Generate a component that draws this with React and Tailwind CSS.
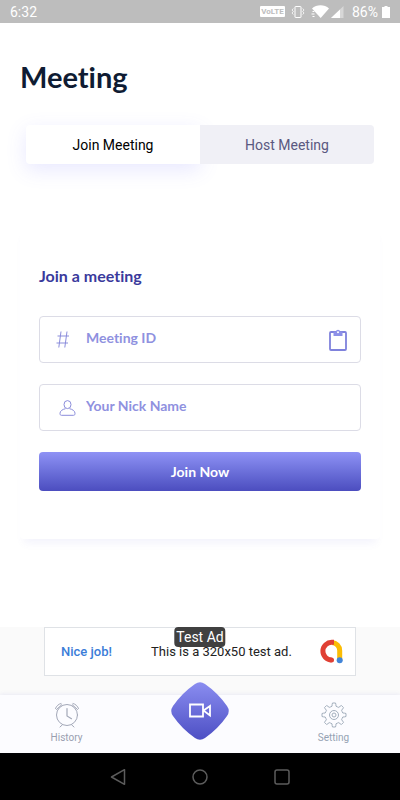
/**
 * Meeting Screen
 */

import { useState } from 'react';

function VolteIcon() {
    return (
        <span className="flex h-[11px] w-[25px] items-center justify-center rounded-[1px] bg-white text-[8px] leading-none font-bold text-[#bdbdbd]">
            VoLTE
        </span>
    );
}

function VibrateIcon() {
    return (
        <svg width="14" height="12" viewBox="0 0 14 12" fill="none" stroke="white" strokeWidth="1">
            <rect x="4" y="0.5" width="6" height="11" rx="0.5" />
            <path d="M2.3 2.5L1 4l1.300 1.500L1 7l1.300 1.500M11.700 2.500L13 4l-1.300 1.500L13 7l-1.300 1.500" strokeWidth="0.8" />
        </svg>
    );
}

function WifiIcon() {
    return (
        <svg width="18" height="13" viewBox="0 0 18 13" fill="white">
            <path d="M1 3.500C5.500-.7 13.500-.7 18 3.500L9.700 13z" />
            <path d="M0 6h4v7H0z" fill="#bdbdbd" />
            <path d="M1.500 6.500h2M0.500 9h3M1.500 11.500h2" stroke="white" strokeWidth="1" />
        </svg>
    );
}

function SignalIcon() {
    return (
        <svg width="13" height="12" viewBox="0 0 13 12" fill="white">
            <path d="M0 12L12.500 0v12z" fillOpacity="0.4" />
            <path d="M0 12L9 3.400V12z" />
        </svg>
    );
}

function BatteryIcon() {
    return (
        <svg width="8" height="12" viewBox="0 0 8 12" fill="white">
            <path d="M2.500 0h3v1H8v11H0V1h2.500z" />
        </svg>
    );
}

function HashIcon() {
    return (
        <svg width="14" height="17" viewBox="0 0 14 17" fill="none" stroke="#8b8ddb" strokeWidth="1">
            <path d="M5 0.500L2.800 16.500M11 0.500L8.800 16.500M1.500 5H13M0.500 12H12" />
        </svg>
    );
}

function PersonIcon() {
    return (
        <svg width="20" height="16" viewBox="0 0 20 16" fill="none" stroke="#8b8ddb" strokeWidth="1">
            <ellipse cx="11.500" cy="4.600" rx="3.500" ry="4" />
            <path d="M9.500 8.700C6.500 9.300 4 11 4 13.300c0 1.500.4 2 1.500 2h12c1.100 0 1.500-.5 1.500-2 0-2.300-2.500-4-5.500-4.600" />
        </svg>
    );
}

function ClipboardIcon() {
    return (
        <svg width="18" height="22" viewBox="0 0 18 22">
            <rect x="1" y="3" width="16" height="18" rx="1" fill="none" stroke="#7f82dc" strokeWidth="1.800" />
            <path d="M4.500 2.500h2.200a2.400 2.400 0 0 1 4.600 0h2.200V7h-9z" fill="#8d90e8" />
            <circle cx="9" cy="3.200" r="1" fill="white" />
        </svg>
    );
}

function AlarmIcon() {
    return (
        <svg width="26" height="26" viewBox="0 0 26 26" fill="none" stroke="#a3a8b8" strokeWidth="1" strokeLinecap="round">
            <circle cx="13" cy="13" r="10.500" />
            <path d="M13 6.500V14l4.500 2.700" strokeWidth="1.200" />
            <path d="M1.500 6.500C2.500 4 4.500 2 7 1.500M2.500 7.500L7.800 2.700M24.500 6.500C23.500 4 21.500 2 19 1.500M23.500 7.500L18.200 2.700" />
            <path d="M8.500 22.700L6 25M17.500 22.700L20 25" />
        </svg>
    );
}

function GearIcon() {
    return (
        <svg width="26" height="26" viewBox="0 0 26 26" fill="none" stroke="#a3afbd" strokeWidth="1" strokeLinejoin="round">
            <path d="M11.500 1h3Q15 2.500 15 4.200Q16.400 5 17.800 5.400Q19 4.200 20.400 3.500L22.500 5.600Q21.800 7 20.600 8.200Q21 9.600 21.800 11Q23.500 11 25 11.500v3Q23.500 15 21.800 15Q21 16.400 20.600 17.800Q21.800 19 22.500 20.400L20.400 22.500Q19 21.800 17.800 20.600Q16.400 21 15 21.800Q15 23.500 14.500 25h-3Q11 23.500 11 21.800Q9.600 21 8.200 20.600Q7 21.800 5.600 22.500L3.500 20.400Q4.200 19 5.400 17.800Q5 16.400 4.200 15Q2.500 15 1 14.500v-3Q2.500 11 4.200 11Q5 9.600 5.400 8.200Q4.200 7 3.500 5.600L5.600 3.500Q7 4.200 8.200 5.400Q9.600 5 11 4.200Q11 2.500 11.500 1z" />
            <circle cx="13" cy="13" r="4.500" />
            <circle cx="13" cy="13" r="2" />
        </svg>
    );
}

function AdMobLogo() {
    return (
        <svg width="25" height="25" viewBox="0 0 25 25" fill="none" strokeWidth="5">
            <path d="M13 3.500a8 8 0 0 1 7.700 8V21" stroke="#fbbc04" />
            <path d="M15 3.300h-2a8.800 8.800 0 0 0-.5 17.700" stroke="#e04034" />
            <circle cx="12.500" cy="21" r="2.500" fill="#e04034" />
            <circle cx="20.700" cy="21.300" r="3" fill="#4285d8" />
        </svg>
    );
}

function CameraButton() {
    return (
        <button type="button" aria-label="Start meeting" className="absolute -top-[14px] left-1/2 -translate-x-1/2">
            <svg width="60" height="60" viewBox="0 0 60 60" fill="none">
                <defs>
                    <linearGradient id="fab" x1="0" y1="0" x2="0" y2="1">
                        <stop offset="0" stopColor="#8a8df0" />
                        <stop offset="1" stopColor="#4d4fc4" />
                    </linearGradient>
                </defs>
                <path
                    d="M25 3Q30-.500 35 3Q48 12 57 25Q60.500 30 57 35Q48 48 35 57Q30 60.500 25 57Q12 48 3 35Q-.500 30 3 25Q12 12 25 3z"
                    fill="url(#fab)"
                />
                <path d="M20 23.500h13v12H20zM33.500 29.500L40 25v9.500z" stroke="white" strokeWidth="1.800" />
            </svg>
        </button>
    );
}

function StatusBar() {
    return (
        <header className="flex h-[23px] items-center justify-between bg-[#bdbdbd] px-2.5 text-sm text-white">
            <span>6:32</span>
            <div className="flex items-center gap-1.5">
                <VolteIcon />
                <VibrateIcon />
                <div className="flex items-center gap-0.5">
                    <WifiIcon />
                    <SignalIcon />
                </div>
                <div className="flex items-center gap-1 pl-0.5">
                    <span>86%</span>
                    <BatteryIcon />
                </div>
            </div>
        </header>
    );
}

function Tabs({ active, onChange }) {
    const base = 'h-[39px] flex-1 text-sm';
    const on = 'rounded-l bg-white text-black shadow-[0_6px_20px_rgba(100,100,255,0.15)]';
    const off = 'rounded-r bg-[#f0f0f6] text-[#5a5880]';

    return (
        <div role="tablist" className="mx-[26px] flex">
            {['Join Meeting', 'Host Meeting'].map((label) => (
                <button
                    key={label}
                    type="button"
                    role="tab"
                    aria-selected={active === label}
                    onClick={() => onChange(label)}
                    className={`${base} ${active === label ? on : off}`}
                >
                    {label}
                </button>
            ))}
        </div>
    );
}

function Field({ id, label, icon, action }) {
    return (
        <div className="flex h-[47px] items-center rounded border border-[#dcdce6] pr-[13px] pl-4">
            <label htmlFor={id} aria-label={label} className="flex w-[30px] shrink-0">
                {icon}
            </label>
            <input
                id={id}
                type="text"
                placeholder={label}
                className="min-w-0 flex-1 pb-1 font-['Lato',sans-serif] text-sm font-bold text-[#3d3da0] outline-none [font-variant-ligatures:none] placeholder:text-[#8f91df]"
            />
            {action}
        </div>
    );
}

function AdBanner() {
    return (
        <div className="flex justify-center bg-[#fafafa] pb-[19px]">
            <div className="relative mx-11 flex h-[49px] flex-1 items-center justify-between border border-[#dfe2e6] bg-white pr-[11px] pl-4 text-[13px]">
                <a href="#ad" className="font-medium text-[#3b7dd8]">
                    Nice job!
                </a>
                <span className="ml-3 text-[#222222]">This is a 320x50 test ad.</span>
                <AdMobLogo />
                <span className="absolute -top-px left-1/2 flex h-5 -translate-x-1/2 items-center rounded-sm bg-[#404040] px-0.5 text-sm whitespace-nowrap text-white">
                    Test Ad
                </span>
            </div>
        </div>
    );
}

function BottomNav() {
    return (
        <nav className="relative flex h-[58px] justify-between bg-[#fcfcff] px-[33px] text-[10px] shadow-[0_-1px_4px_rgba(100,100,200,0.10)]">
            <a href="#history" className="flex w-[67px] flex-col items-center gap-0.5 pt-[7px] text-[#9a9fb0]">
                <AlarmIcon />
                History
            </a>
            <CameraButton />
            <a href="#setting" className="flex w-[67px] flex-col items-center gap-0.5 pt-[7px] text-[#95a2b3]">
                <GearIcon />
                Setting
            </a>
        </nav>
    );
}

function SystemNav() {
    return (
        <div className="flex h-[47px] items-center justify-center gap-[66px] bg-black">
            <button type="button" aria-label="Back">
                <svg width="16" height="18" viewBox="0 0 16 18" fill="none" stroke="#5c5c5c" strokeWidth="1.500" strokeLinejoin="round">
                    <path d="M1.500 9L14.500 1.700v14.600z" />
                </svg>
            </button>
            <button type="button" aria-label="Home">
                <svg width="16" height="16" viewBox="0 0 16 16" fill="none" stroke="#5c5c5c" strokeWidth="1.500">
                    <circle cx="8" cy="8" r="7" />
                </svg>
            </button>
            <button type="button" aria-label="Recents">
                <svg width="16" height="16" viewBox="0 0 16 16" fill="none" stroke="#5c5c5c" strokeWidth="1.500">
                    <rect x="1" y="1" width="14" height="14" rx="2" />
                </svg>
            </button>
        </div>
    );
}

export default function App() {
    const [tab, setTab] = useState('Join Meeting');

    return (
        <div className="flex min-h-screen flex-col bg-white font-['Roboto',sans-serif]">
            <StatusBar />

            <main className="flex-1">
                <h1 className="px-5 pt-9 pb-[30px] font-['Lato',sans-serif] text-[29px] leading-9 font-bold text-[#0f1c33] [font-variant-ligatures:none]">
                    Meeting
                </h1>

                <Tabs active={tab} onChange={setTab} />

                {/* Join form */}
                <form
                    onSubmit={(e) => e.preventDefault()}
                    className="mx-5 mt-[62px] rounded bg-white px-[19px] pt-10 pb-12 shadow-[0_8px_8px_-4px_rgba(100,100,220,0.08)]"
                >
                    <h2 className="font-['Lato',sans-serif] text-base leading-5 font-bold text-[#3a3a9c] [font-variant-ligatures:none]">
                        Join a meeting
                    </h2>
                    <div className="mt-[30px] flex flex-col gap-[21px]">
                        <Field
                            id="meeting-id"
                            label="Meeting ID"
                            icon={<HashIcon />}
                            action={
                                <button type="button" aria-label="Paste">
                                    <ClipboardIcon />
                                </button>
                            }
                        />
                        <Field id="nick-name" label="Your Nick Name" icon={<PersonIcon />} />
                        <button
                            type="submit"
                            className="h-[39px] rounded bg-linear-to-b from-[#8f92f5] to-[#4c4dbf] font-['Lato',sans-serif] text-sm font-bold text-white"
                        >
                            Join Now
                        </button>
                    </div>
                </form>
            </main>

            <AdBanner />
            <BottomNav />
            <SystemNav />
        </div>
    );
}
